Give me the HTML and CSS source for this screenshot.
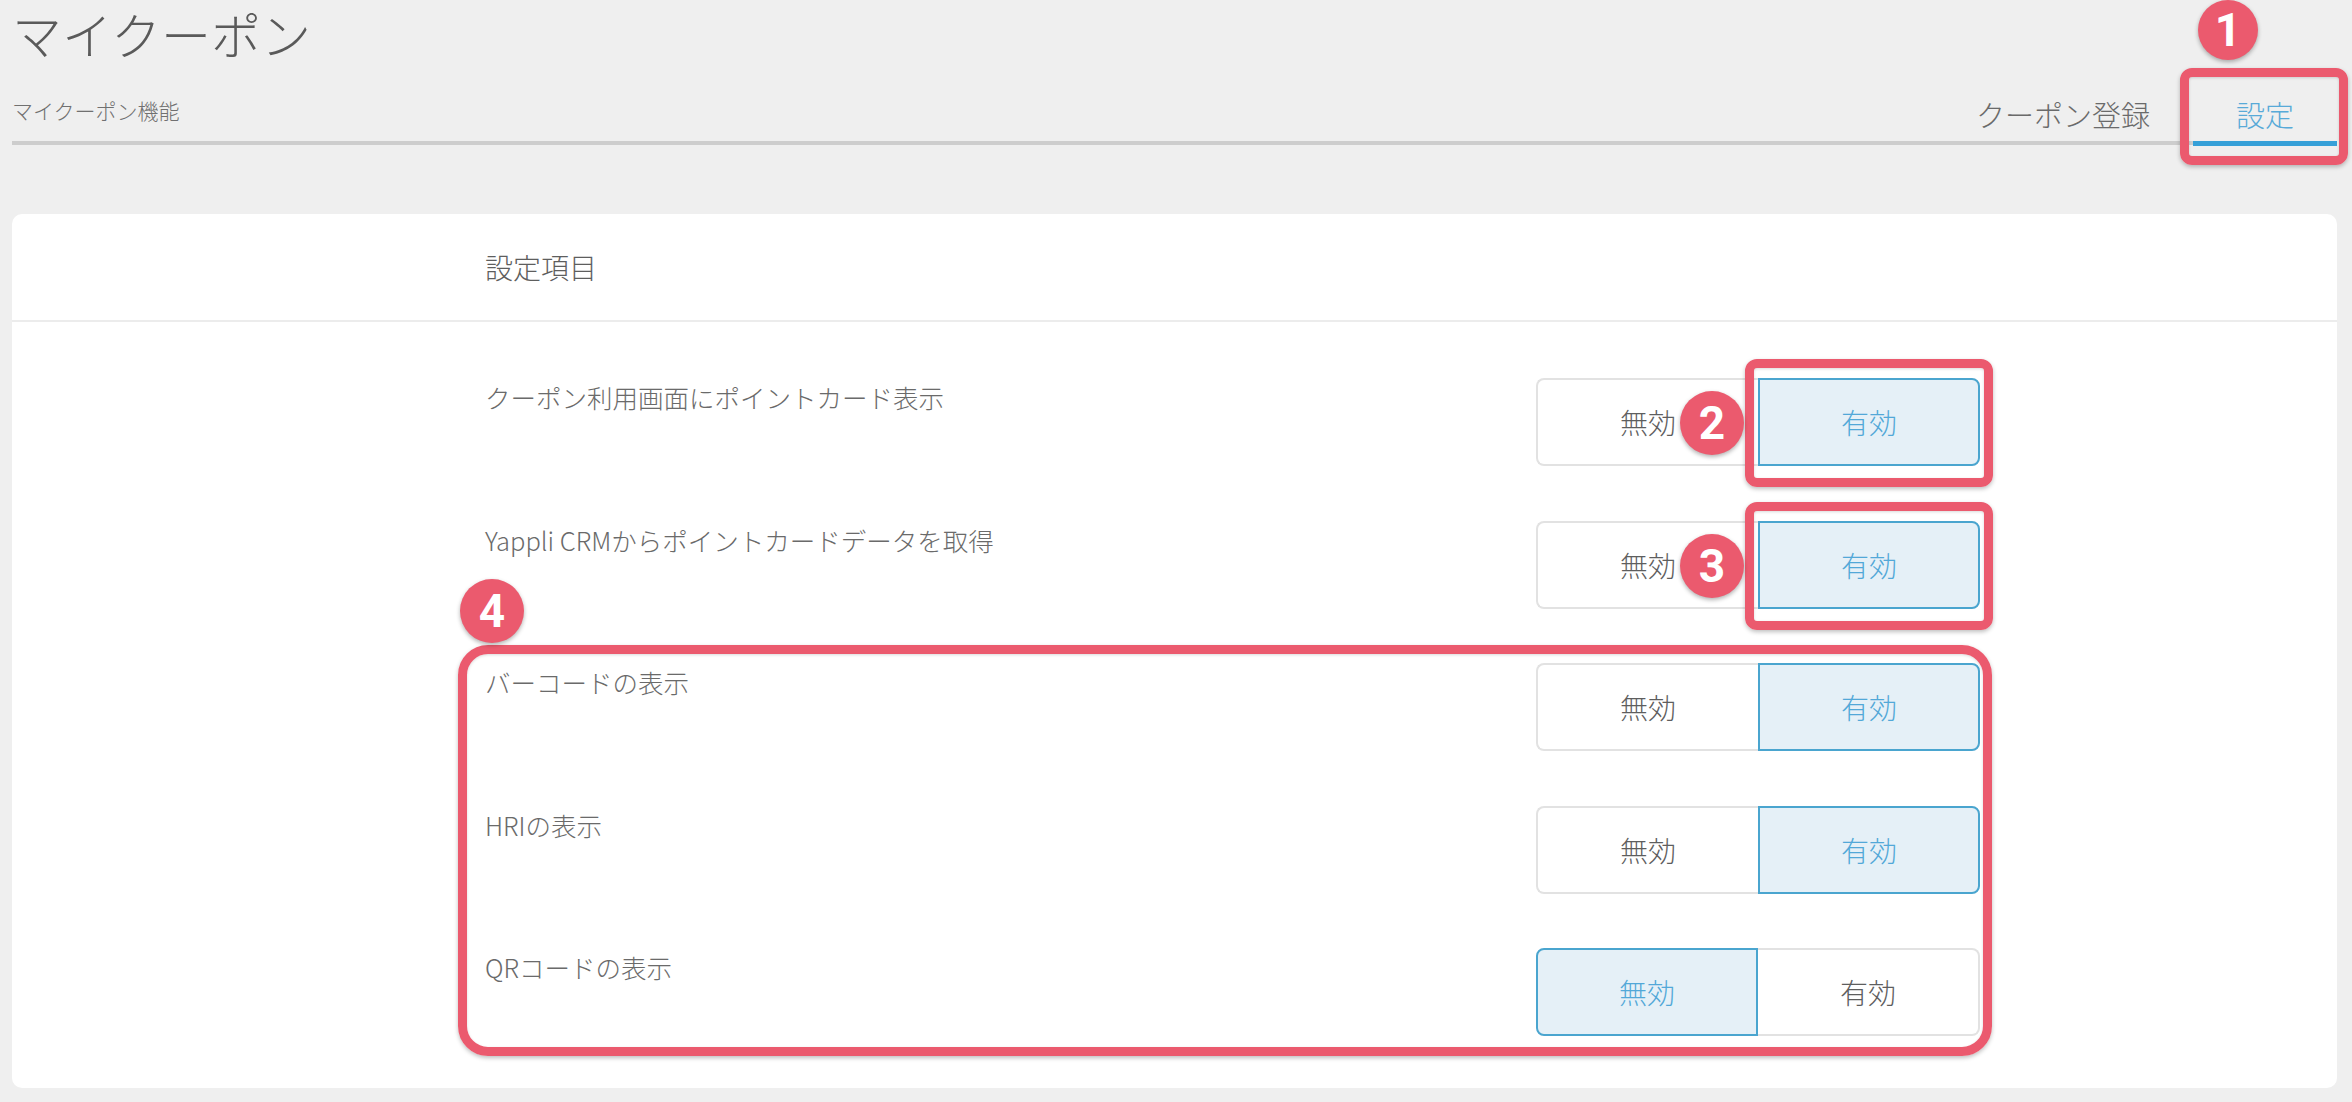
FILE: index.html
```html
<!DOCTYPE html>
<html lang="ja">

<head>
    <meta charset="UTF-8">
    <meta name="viewport" content="width=device-width, initial-scale=1.0">
    <title>マイクーポン</title>
    <link rel="stylesheet" href="styles.css">
</head>

<body>
    <div class="page">
        <h1 class="title">マイクーポン</h1>

        <div class="subhead">
            <p class="subtitle">マイクーポン機能</p>
            <ul class="tabs">
                <li class="tab">クーポン登録</li>
                <li class="tab active">
                    設定
                    <span class="mark markTab"></span>
                    <span class="num numTab">1</span>
                </li>
            </ul>
        </div>

        <div class="card">
            <div class="cardHead">設定項目</div>

            <div class="cardBody">
                <div class="row">
                    <p class="label">クーポン利用画面にポイントカード表示</p>
                    <div class="switch">
                        <button class="opt">無効</button>
                        <button class="opt on">
                            有効
                            <span class="mark markBtn"></span>
                            <span class="num numBtn">2</span>
                        </button>
                    </div>
                </div>

                <div class="row">
                    <p class="label">Yappli CRMからポイントカードデータを取得</p>
                    <div class="switch">
                        <button class="opt">無効</button>
                        <button class="opt on">
                            有効
                            <span class="mark markBtn"></span>
                            <span class="num numBtn">3</span>
                        </button>
                    </div>
                </div>

                <!-- コード表示の3項目 -->
                <div class="group">
                    <span class="mark markGroup"></span>
                    <span class="num numGroup">4</span>

                    <div class="row">
                        <p class="label">バーコードの表示</p>
                        <div class="switch">
                            <button class="opt">無効</button>
                            <button class="opt on">有効</button>
                        </div>
                    </div>

                    <div class="row">
                        <p class="label">HRIの表示</p>
                        <div class="switch">
                            <button class="opt">無効</button>
                            <button class="opt on">有効</button>
                        </div>
                    </div>

                    <div class="row">
                        <p class="label">QRコードの表示</p>
                        <div class="switch">
                            <button class="opt on">無効</button>
                            <button class="opt">有効</button>
                        </div>
                    </div>
                </div>
            </div>
        </div>
    </div>
</body>

</html>
```

FILE: styles.css
```css
body {
    margin: 0;
    background-color: #efefef;
    font-family: "Noto Sans CJK JP", "Noto Sans", sans-serif;
    font-weight: 300;
    color: #666;
}

.page {
    padding: 0 15px 0 12px;
}

.title {
    margin: 0;
    font-size: 50px;
    font-weight: 300;
    line-height: 66px;
    color: #5a5a5a;
}

.subhead {
    margin-top: 28px;
    display: flex;
    flex-direction: row;
    justify-content: space-between;
    align-items: flex-end;
    border-bottom: 4px solid #cdcdcd;
}

.subtitle {
    margin: 0;
    padding-bottom: 17px;
    font-size: 21px;
    line-height: 28px;
    color: #707070;
}

.tabs {
    margin: 0 0 -4px;
    padding: 0;
    list-style: none;
    display: flex;
    flex-direction: row;
}

.tab {
    position: relative;
    padding: 0 43px 7px;
    font-size: 29px;
    line-height: 40px;
    color: #6a6a6a;
    border-bottom: 4px solid transparent;
}

.tab.active {
    color: #58aad8;
    border-bottom: 5px solid #36a0d8;
    margin-bottom: -1px;
}

.card {
    margin-top: 69px;
    background-color: white;
    border-radius: 10px;
}

.cardHead {
    padding: 0 473px;
    height: 106px;
    line-height: 106px;
    font-size: 28px;
    color: #5e5e5e;
    border-bottom: 2px solid #ececec;
}

.cardBody {
    padding: 56px 357px 52px 473px;
    display: flex;
    flex-direction: column;
    gap: 54.5px;
}

.group {
    position: relative;
    display: flex;
    flex-direction: column;
    gap: 54.5px;
}

.row {
    display: flex;
    flex-direction: row;
    justify-content: space-between;
    align-items: flex-start;
}

.label {
    margin: 0;
    padding-top: 4px;
    font-size: 25.5px;
    line-height: 30px;
    color: #6a6a6a;
}

.switch {
    display: flex;
    flex-direction: row;
}

.opt {
    position: relative;
    width: 222px;
    height: 88px;
    margin: 0;
    padding: 0;
    font-family: inherit;
    font-weight: 300;
    font-size: 28px;
    color: #5e5e5e;
    background-color: white;
    border: 2px solid #e2e2e2;
}

.opt:first-child {
    border-radius: 8px 0 0 8px;
    border-right: none;
}

.opt:last-child {
    border-radius: 0 8px 8px 0;
    border-left: none;
}

.opt.on {
    color: #52a8d8;
    background-color: #e5f0f7;
    border: 2px solid #4aa5cf;
}

/* пометки поверх интерфейса */
.mark {
    position: absolute;
    border: 9px solid #eb5a6e;
    box-shadow: 0 2px 4px rgba(0, 0, 0, 0.25), inset 0 1px 3px rgba(0, 0, 0, 0.15);
    pointer-events: none;
}

.markTab {
    top: -26px;
    bottom: -24px;
    left: -13px;
    right: -11px;
    border-radius: 12px;
}

.markBtn {
    top: -21px;
    bottom: -23px;
    left: -15px;
    right: -15px;
    border-radius: 12px;
}

.markGroup {
    top: -18px;
    bottom: -20px;
    left: -27px;
    right: -12px;
    border-radius: 30px;
}

.num {
    position: absolute;
    width: 64px;
    height: 64px;
    border-radius: 50%;
    background-color: #eb5a6e;
    box-shadow: 0 2px 4px rgba(0, 0, 0, 0.3);
    color: white;
    font-family: Roboto, "Liberation Sans", sans-serif;
    font-weight: 700;
    font-size: 46px;
    line-height: 64px;
    text-align: center;
    z-index: 2;
}

.numTab {
    width: 60px;
    height: 60px;
    line-height: 60px;
    top: -94px;
    left: 5px;
}

.numBtn {
    top: 11px;
    left: -80px;
}

.numGroup {
    top: -84px;
    left: -25px;
}
```
